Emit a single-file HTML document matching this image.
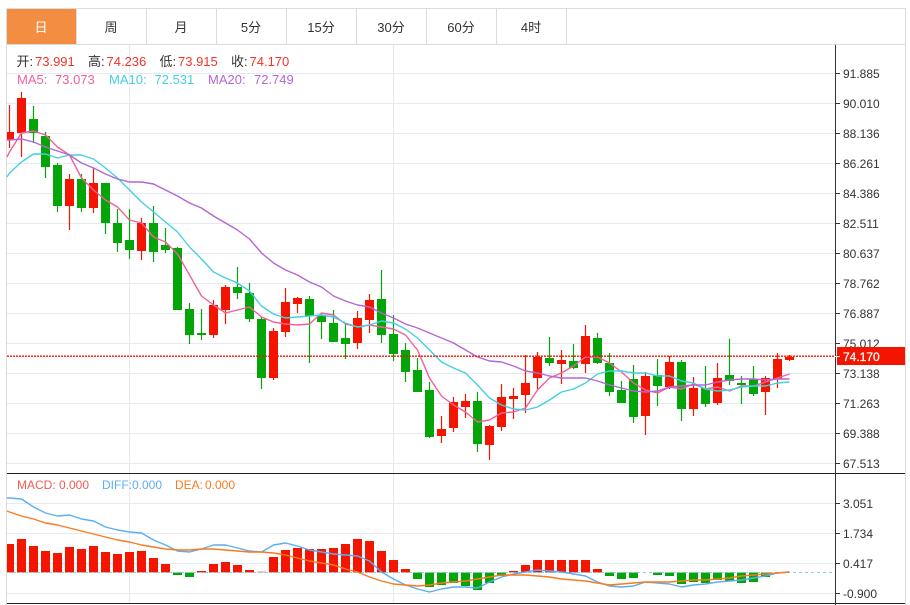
<!DOCTYPE html>
<html lang="zh">
<head>
<meta charset="utf-8">
<title>K线图</title>
<style>
html,body{margin:0;padding:0;background:#fff;width:910px;height:605px;overflow:hidden}
svg{display:block}
text{font-family:"Liberation Sans","Noto Sans CJK SC",sans-serif}
</style>
</head>
<body>
<svg width="910" height="605" viewBox="0 0 910 605" xmlns="http://www.w3.org/2000/svg">
<rect width="910" height="605" fill="#fff"/>

<!-- grid -->
<path d="M7 73.5H835M7 103.5H835M7 133.5H835M7 163.5H835M7 193.5H835M7 223.5H835M7 253.5H835M7 283.5H835M7 313.5H835M7 343.5H835M7 373.5H835M7 403.5H835M7 433.5H835M7 463.5H835M7 503.5H835M7 533.5H835M7 563.5H835M7 593.5H835M129.5 45V603M393.5 45V603" stroke="#e3eaf1" stroke-width="1" fill="none"/>

<!-- frame -->
<path d="M6.5 8.5H905.5V605M6.5 8.5V605M7 44.5H905" stroke="#dcdcdc" fill="none"/>
<rect x="7" y="9" width="69" height="35" fill="#f38d42"/>
<path d="M76.5 9V44M146.5 9V44M216.5 9V44M286.5 9V44M356.5 9V44M426.5 9V44M496.5 9V44M566.5 9V44" stroke="#dcdcdc" fill="none"/>
<g font-size="13" text-anchor="middle" fill="#333">
<text x="41" y="32" fill="#fff">日</text>
<text x="111" y="32">周</text>
<text x="181" y="32">月</text>
<text x="251" y="32">5分</text>
<text x="321" y="32">15分</text>
<text x="391" y="32">30分</text>
<text x="461" y="32">60分</text>
<text x="531" y="32">4时</text>
</g>

<!-- candles wicks -->
<path fill="none" stroke="#f41500" stroke-width="1.2" d="M9.5 105V148M21.5 92V157M69.5 174V230M93.5 168V213M141.5 218V260M213.5 300V338M225.5 285V324M273.5 328V380M285.5 288V337M297.5 297V313M357.5 311V349M369.5 294V333M441.5 416V443M453.5 397V432M465.5 394V418M489.5 425V460M501.5 384V431M513.5 388V419M525.5 355V413M537.5 352V389M561.5 350V384M585.5 325V373M645.5 372V435M669.5 356V389M693.5 377V416M717.5 363V405M765.5 376V415M777.5 353V388M789.5 355V361"/>
<path fill="none" stroke="#05a50c" stroke-width="1.2" d="M33.5 106V143M45.5 132V178M57.5 163V212M81.5 174V212M105.5 183V234M117.5 209V252M129.5 209V259M153.5 206V262M165.5 228V253M177.5 247V310M189.5 303V344M201.5 309V340M237.5 267V299M249.5 283V322M261.5 317V389M309.5 296V363M321.5 314V339M333.5 310V342M345.5 324V359M381.5 270V343M393.5 315V361M405.5 343V382M417.5 358V392M429.5 382V438M477.5 392V452M549.5 337V366M573.5 344V369M597.5 333V364M609.5 353V396M621.5 381V403M633.5 365V423M657.5 359V406M681.5 360V421M705.5 366V407M729.5 339V385M741.5 376V404M753.5 366V396"/>

<!-- candle bodies -->
<path fill="#f41500" d="M7 132H14V140H7zM17 98h9V133h-9zM65 179h9V206h-9zM89 183h9V208h-9zM137 223h9V251h-9zM209 305h9V335h-9zM221 287h9V310h-9zM269 331h9V378h-9zM281 302h9V332h-9zM293 298h9V304h-9zM353 318h9V343h-9zM365 300h9V320h-9zM437 429h9V436h-9zM449 402h9V428h-9zM461 401h9V407h-9zM485 426h9V445h-9zM497 397h9V427h-9zM509 396h9V399h-9zM521 383h9V395h-9zM533 357h9V378h-9zM557 360h9V364h-9zM581 336h9V364h-9zM641 376h9V416h-9zM665 362h9V387h-9zM689 388h9V409h-9zM713 378h9V403h-9zM761 378h9V392h-9zM773 359h9V379h-9zM785 357h9V360h-9z"/>
<path fill="#03a508" d="M29 119h9V133h-9zM41 136h9V167h-9zM53 165h9V206h-9zM77 179h9V208h-9zM101 183h9V223h-9zM113 223h9V243h-9zM125 240h9V250h-9zM149 223h9V252h-9zM161 245h9V250h-9zM173 248h9V310h-9zM185 309h9V335h-9zM197 333h9V335h-9zM233 287h9V293h-9zM245 293h9V319h-9zM257 319h9V378h-9zM305 299h9V316h-9zM317 316h9V322h-9zM329 323h9V342h-9zM341 338h9V344h-9zM377 299h9V335h-9zM389 334h9V354h-9zM401 350h9V372h-9zM413 370h9V392h-9zM425 390h9V437h-9zM473 401h9V444h-9zM545 358h9V363h-9zM569 361h9V368h-9zM593 338h9V363h-9zM605 363h9V392h-9zM617 390h9V403h-9zM629 379h9V417h-9zM653 375h9V386h-9zM677 362h9V409h-9zM701 388h9V404h-9zM725 375h9V381h-9zM737 383h9V385h-9zM749 379h9V394h-9z"/>

<!-- MA lines -->
<g fill="none" stroke-width="1.4" stroke-linejoin="round">
<polyline stroke="#f0619a" points="7,157 9.5,152 21.5,133 33.5,131 45.5,135 57.5,147 69.5,155 81.5,178 93.5,190 105.5,200 117.5,207 129.5,220 141.5,223 153.5,237 165.5,242 177.5,254 189.5,275 201.5,296 213.5,305 225.5,313 237.5,310 249.5,307 261.5,317 273.5,322 285.5,324 297.5,325 309.5,324 321.5,313 333.5,315 345.5,324 357.5,327 369.5,325 381.5,327 393.5,329 405.5,335 417.5,350 429.5,378 441.5,396 453.5,405 465.5,412 477.5,422 489.5,420 501.5,413 513.5,412 525.5,408 537.5,390 549.5,378 561.5,373 573.5,366 585.5,357 597.5,357 609.5,363 621.5,372 633.5,383 645.5,390 657.5,393 669.5,387 681.5,389 693.5,384 705.5,389 717.5,387 729.5,391 741.5,386 753.5,386 765.5,382 777.5,378 789.5,374"/>
<polyline stroke="#45cfe2" points="7,177 9.5,173 21.5,162 33.5,154 45.5,154 57.5,158 69.5,155 81.5,155 93.5,159 105.5,168 117.5,178 129.5,190 141.5,202 153.5,212 165.5,222 177.5,232 189.5,247 201.5,259 213.5,272 225.5,278 237.5,283 249.5,291 261.5,306 273.5,314 285.5,318 297.5,317 309.5,316 321.5,315 333.5,317 345.5,323 357.5,327 369.5,325 381.5,321 393.5,323 405.5,329 417.5,338 429.5,350 441.5,362 453.5,368 465.5,373 477.5,385 489.5,398 501.5,405 513.5,409 525.5,410 537.5,407 549.5,400 561.5,392 573.5,389 585.5,383 597.5,374 609.5,371 621.5,371 633.5,373 645.5,373 657.5,376 669.5,376 681.5,381 693.5,383 705.5,389 717.5,391 729.5,390 741.5,387 753.5,386 765.5,386 777.5,383 789.5,382"/>
<polyline stroke="#b566d3" points="7,140 9.5,140 21.5,139 33.5,142 45.5,147 57.5,151 69.5,155 81.5,163 93.5,168 105.5,174 117.5,179 129.5,182 141.5,182 153.5,184 165.5,190 177.5,196 189.5,203 201.5,208 213.5,216 225.5,223 237.5,230 249.5,239 261.5,253 273.5,263 285.5,270 297.5,275 309.5,282 321.5,287 333.5,296 345.5,301 357.5,305 369.5,307 381.5,313 393.5,318 405.5,324 417.5,328 429.5,333 441.5,338 453.5,343 465.5,350 477.5,357 489.5,361 501.5,362 513.5,366 525.5,371 537.5,373 549.5,376 561.5,378 573.5,378 585.5,378 597.5,381 609.5,385 621.5,388 633.5,391 645.5,392 657.5,391 669.5,387 681.5,386 693.5,385 705.5,385 717.5,382 729.5,380 741.5,379 753.5,379 765.5,380 777.5,379 789.5,379"/>
</g>

<!-- price line -->
<path d="M7 356.2H837" stroke="#f41500" stroke-width="1.3" stroke-dasharray="2 1" fill="none"/>

<!-- MACD bars -->
<path fill="#f41500" d="M7 544H14V572.5H7zM17 539h9V572.5h-9zM29 546h9V572.5h-9zM41 551h9V572.5h-9zM53 553h9V572.5h-9zM65 547h9V572.5h-9zM77 549h9V572.5h-9zM89 546h9V572.5h-9zM101 552h9V572.5h-9zM113 554h9V572.5h-9zM125 552h9V572.5h-9zM137 551h9V572.5h-9zM149 558h9V572.5h-9zM161 564h9V572.5h-9zM197 571h9V572.5h-9zM209 564h9V572.5h-9zM221 562h9V572.5h-9zM233 565h9V572.5h-9zM245 570h9V572.5h-9zM269 557h9V572.5h-9zM281 550h9V572.5h-9zM293 548h9V572.5h-9zM305 549h9V572.5h-9zM317 549h9V572.5h-9zM329 548h9V572.5h-9zM341 544h9V572.5h-9zM353 539h9V572.5h-9zM365 541h9V572.5h-9zM377 551h9V572.5h-9zM389 560h9V572.5h-9zM401 569h9V572.5h-9zM509 571h9V572.5h-9zM521 565h9V572.5h-9zM533 560h9V572.5h-9zM545 560h9V572.5h-9zM557 560h9V572.5h-9zM569 560h9V572.5h-9zM581 560h9V572.5h-9zM593 569h9V572.5h-9z"/>
<path fill="#f68a84" d="M257 571.5h9V572.5h-9z"/>
<path fill="#03a508" d="M173 572.5h9V575h-9zM185 572.5h9V577h-9zM413 572.5h9V579h-9zM425 572.5h9V587h-9zM437 572.5h9V585h-9zM449 572.5h9V583h-9zM461 572.5h9V586h-9zM473 572.5h9V590h-9zM485 572.5h9V583h-9zM497 572.5h9V576h-9zM605 572.5h9V576h-9zM617 572.5h9V579h-9zM629 572.5h9V578h-9zM653 572.5h9V575h-9zM665 572.5h9V576h-9zM677 572.5h9V584h-9zM689 572.5h9V582h-9zM701 572.5h9V583h-9zM713 572.5h9V580h-9zM725 572.5h9V581h-9zM737 572.5h9V583h-9zM749 572.5h9V582h-9zM761 572.5h9V577h-9z"/>
<path d="M7 572.5H835" stroke="#7fcfe8" stroke-dasharray="3 3" fill="none"/>

<!-- MACD lines -->
<g fill="none" stroke-width="1.4" stroke-linejoin="round">
<polyline stroke="#5aaef5" points="7,498 9.5,498 21.5,499 33.5,507 45.5,513 57.5,516 69.5,515 81.5,519 93.5,521 105.5,527 117.5,530 129.5,532 141.5,533 153.5,540 165.5,545 177.5,551 189.5,552 201.5,549 213.5,545 225.5,545 237.5,548 249.5,551 261.5,552 273.5,545 285.5,543 297.5,546 309.5,550 321.5,552 333.5,554 345.5,555 357.5,556 369.5,561 381.5,572 393.5,579 405.5,585 417.5,589 429.5,592 441.5,589 453.5,587 465.5,587 477.5,588 489.5,582 501.5,577 513.5,574 525.5,572 537.5,570 549.5,571 561.5,572 573.5,574 585.5,576 597.5,582 609.5,586 621.5,587 633.5,586 645.5,582 657.5,583 669.5,584 681.5,587 693.5,585 705.5,584 717.5,582 729.5,581 741.5,580 753.5,578 765.5,576 777.5,573 789.5,572"/>
<polyline stroke="#f97b1f" points="7,511 9.5,512 21.5,516 33.5,519 45.5,523 57.5,525 69.5,528 81.5,531 93.5,534 105.5,537 117.5,540 129.5,542 141.5,545 153.5,547 165.5,549 177.5,550 189.5,550 201.5,549 213.5,549 225.5,550 237.5,551 249.5,552 261.5,552 273.5,553 285.5,555 297.5,558 309.5,561 321.5,563 333.5,565 345.5,569 357.5,572 369.5,577 381.5,581 393.5,584 405.5,585 417.5,586 429.5,585 441.5,583 453.5,582 465.5,581 477.5,579 489.5,577 501.5,575 513.5,575 525.5,575 537.5,576 549.5,577 561.5,579 573.5,580 585.5,581 597.5,583 609.5,585 621.5,584 633.5,583 645.5,582 657.5,582 669.5,582 681.5,581 693.5,580 705.5,580 717.5,579 729.5,578 741.5,576 753.5,575 765.5,574 777.5,573 789.5,572"/>
</g>

<!-- MACD frame -->
<path d="M7 473.5H905M7 603.5H905" stroke="#222" fill="none"/>

<!-- axis -->
<path d="M835.5 45V605" stroke="#333" fill="none"/>
<path d="M835 73.5h5M835 103.5h5M835 133.5h5M835 163.5h5M835 193.5h5M835 223.5h5M835 253.5h5M835 283.5h5M835 313.5h5M835 343.5h5M835 373.5h5M835 403.5h5M835 433.5h5M835 463.5h5M835 503.5h5M835 533.5h5M835 563.5h5M835 593.5h5" stroke="#333" fill="none"/>
<g font-size="12" fill="#333">
<text x="843" y="78">91.885</text>
<text x="843" y="108">90.010</text>
<text x="843" y="138">88.136</text>
<text x="843" y="168">86.261</text>
<text x="843" y="198">84.386</text>
<text x="843" y="228">82.511</text>
<text x="843" y="258">80.637</text>
<text x="843" y="288">78.762</text>
<text x="843" y="318">76.887</text>
<text x="843" y="348">75.012</text>
<text x="843" y="378">73.138</text>
<text x="843" y="408">71.263</text>
<text x="843" y="438">69.388</text>
<text x="843" y="468">67.513</text>
<text x="843" y="508">3.051</text>
<text x="843" y="538">1.734</text>
<text x="843" y="568">0.417</text>
<text x="843" y="598">-0.900</text>
</g>
<rect x="837" y="347" width="68" height="18" fill="#f41500"/>
<path d="M835 356.5h5" stroke="#fff" fill="none"/>
<text x="843" y="361" font-size="12" fill="#fff" stroke="#fff" stroke-width=".3">74.170</text>

<!-- header labels -->
<g font-size="13">
<text x="16.5" y="66" fill="#333">开:</text><text x="35" y="66" fill="#f5332a">73.991</text>
<text x="88" y="66" fill="#333">高:</text><text x="106.5" y="66" fill="#f5332a">74.236</text>
<text x="159.5" y="66" fill="#333">低:</text><text x="178" y="66" fill="#f5332a">73.915</text>
<text x="231" y="66" fill="#333">收:</text><text x="249.5" y="66" fill="#f5332a">74.170</text>
<text x="17" y="84" fill="#f0619a">MA5:</text><text x="55" y="84" fill="#f0619a">73.073</text>
<text x="109" y="84" fill="#45cfe2">MA10:</text><text x="154.5" y="84" fill="#45cfe2">72.531</text>
<text x="208" y="84" fill="#b566d3">MA20:</text><text x="254" y="84" fill="#b566d3">72.749</text>
</g>
<g font-size="12">
<text x="17" y="489" fill="#f55a50">MACD:</text><text x="59" y="489" fill="#f55a50">0.000</text>
<text x="102" y="489" fill="#5aaef5">DIFF:</text><text x="132" y="489" fill="#5aaef5">0.000</text>
<text x="175" y="489" fill="#f97b1f">DEA:</text><text x="205" y="489" fill="#f97b1f">0.000</text>
</g>
</svg>
</body>
</html>
